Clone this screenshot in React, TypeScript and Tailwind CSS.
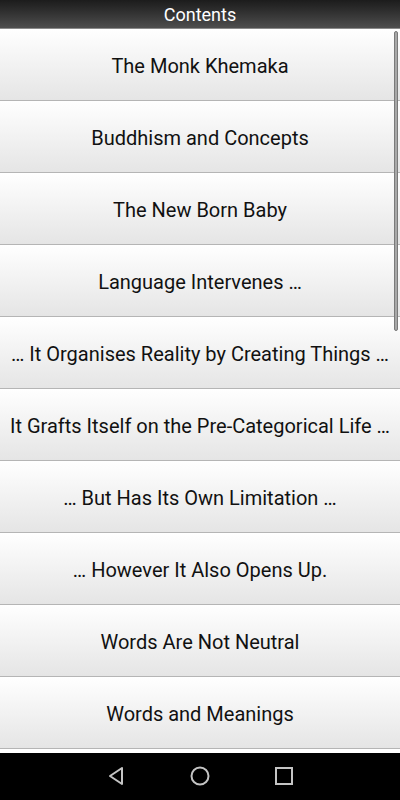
import React from "react";

const items = [
  "The Monk Khemaka",
  "Buddhism and Concepts",
  "The New Born Baby",
  "Language Intervenes …",
  "… It Organises Reality by Creating Things …",
  "It Grafts Itself on the Pre-Categorical Life …",
  "… But Has Its Own Limitation …",
  "… However It Also Opens Up.",
  "Words Are Not Neutral",
  "Words and Meanings",
];

export default function App() {
  return (
    <div
      className="relative w-[400px] h-[800px] overflow-hidden bg-white flex flex-col"
      style={{ fontFamily: "Roboto, 'Noto Sans', sans-serif" }}
    >
      <div className="h-[29px] shrink-0 flex items-center justify-center bg-gradient-to-b from-[#1c1c1c] to-[#4e4e4e] border-b border-[#8a8a8a] text-white text-[18px] leading-none pt-[2px]">
        Contents
      </div>
      <div className="flex flex-col">
        {items.map((t) => (
          <div
            key={t}
            className="h-[72px] shrink-0 flex items-center justify-center bg-gradient-to-b from-[#ffffff] to-[#e5e5e5] border-b border-[#b5b5b5] text-[#111] text-[20px] whitespace-nowrap overflow-hidden pt-[2px]"
          >
            {t}
          </div>
        ))}
      </div>
      <div className="h-[4px] shrink-0 bg-white" />
      <div className="flex-1 bg-black flex items-center justify-center">
        <div className="flex items-center justify-between w-[186px] pb-[1px]">
          <svg width="18" height="20" viewBox="0 0 18 20">
            <path d="M15 2 L3 10 L15 18 Z" fill="none" stroke="#c4c4c4" strokeWidth="2" strokeLinejoin="round" />
          </svg>
          <svg width="20" height="20" viewBox="0 0 20 20">
            <circle cx="10" cy="10" r="8.5" fill="none" stroke="#c4c4c4" strokeWidth="2" />
          </svg>
          <svg width="18" height="18" viewBox="0 0 18 18">
            <rect x="1" y="1" width="16" height="16" fill="none" stroke="#c4c4c4" strokeWidth="2" />
          </svg>
        </div>
      </div>
      <div className="absolute left-[394px] top-[31px] w-[4px] h-[300px] rounded-full bg-[#a8a8a8] border border-[#7a7a7a]" />
    </div>
  );
}
